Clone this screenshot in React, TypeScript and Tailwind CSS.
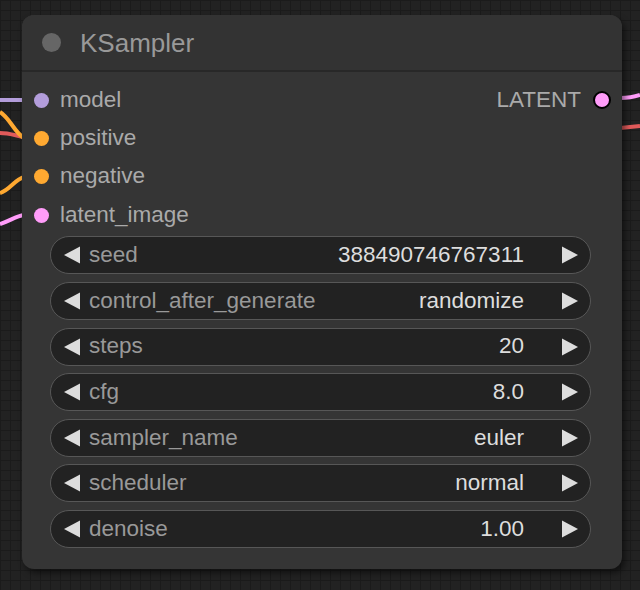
import React from "react";

const inputs = [
    { name: "model", color: "#b39ddb" },
    { name: "positive", color: "#ffa931" },
    { name: "negative", color: "#ffa931" },
    { name: "latent_image", color: "#ff9cf9" },
];

const widgets = [
    { name: "seed", value: "388490746767311" },
    { name: "control_after_generate", value: "randomize" },
    { name: "steps", value: "20" },
    { name: "cfg", value: "8.0" },
    { name: "sampler_name", value: "euler" },
    { name: "scheduler", value: "normal" },
    { name: "denoise", value: "1.00" },
];

function Arrow({ dir }: { dir: "left" | "right" }) {
    return (
        <svg width="18" height="18" viewBox="0 0 18 18" className="shrink-0">
            {dir === "left" ? (
                <polygon points="1,9 17,0.5 17,17.5" fill="#dddddd" />
            ) : (
                <polygon points="17,9 1,0.5 1,17.5" fill="#dddddd" />
            )}
        </svg>
    );
}

function Wires() {
    return (
        <svg className="absolute inset-0 pointer-events-none" width="640" height="590">
            {/* left side */}
            <path d="M0 100 L24 100" stroke="#b39ddb" strokeWidth="4" fill="none" />
            <path d="M0 133 C8 133 14 135 24 137" stroke="#e05a5a" strokeWidth="4" fill="none" />
            <path d="M0 112 C10 118 14 132 24 138" stroke="#ffa931" strokeWidth="4" fill="none" />
            <path d="M0 193 C10 190 14 180 24 177" stroke="#ffa931" strokeWidth="4" fill="none" />
            <path d="M0 224 C10 221 16 216 24 215" stroke="#ff9cf9" strokeWidth="4" fill="none" />
            {/* right side */}
            <path d="M620 98 C628 98 634 97 640 95" stroke="#ff9cf9" strokeWidth="4" fill="none" />
            <path d="M620 128 L640 126" stroke="#e05a5a" strokeWidth="4" fill="none" />
        </svg>
    );
}

export default function App() {
    return (
        <div
            className="relative w-[640px] h-[590px] overflow-hidden bg-[#222222] bg-[linear-gradient(#1b1b1b_1px,transparent_1px),linear-gradient(90deg,#1b1b1b_1px,transparent_1px)] bg-[size:10px_10px] pl-[22px] pt-[15px]"
            style={{ fontFamily: '"Liberation Sans", Arial, sans-serif' }}
        >
            <Wires />

            {/* Node */}
            <div className="relative w-[600px] h-[554px] bg-[#353535] rounded-[12px] shadow-[3px_4px_6px_rgba(0,0,0,0.5)] flex flex-col">
                {/* Title bar */}
                <div className="h-[57px] flex items-center bg-[#333333] rounded-t-[12px] border-b-2 border-[#282828]">
                    <div className="w-[19px] h-[19px] rounded-full bg-[#666666] ml-[20px]" />
                    <span className="ml-[19px] text-[26px] text-[#999999] leading-none">KSampler</span>
                </div>

                {/* Slots */}
                <div className="relative flex flex-col pt-[9px]">
                    {inputs.map((inp) => (
                        <div key={inp.name} className="h-[38.3px] flex items-center">
                            <div
                                className="w-[15px] h-[15px] rounded-full ml-[12px]"
                                style={{ backgroundColor: inp.color }}
                            />
                            <span className="ml-[11px] text-[22.5px] text-[#aaaaaa] leading-none">{inp.name}</span>
                        </div>
                    ))}
                    {/* Output */}
                    <div className="absolute right-0 top-[9px] h-[38.3px] flex items-center">
                        <span className="text-[22.5px] text-[#aaaaaa] leading-none">LATENT</span>
                        <div className="w-[18px] h-[18px] rounded-full bg-[#ff9cf9] border-2 border-black ml-[12px] mr-[11px]" />
                    </div>
                </div>

                {/* Widgets */}
                <div className="flex flex-col gap-[7.67px] mt-[2px] ml-[28px] mr-[31px]">
                    {widgets.map((w) => (
                        <div
                            key={w.name}
                            className="h-[38px] rounded-full bg-[#222222] border-[1.5px] border-[#575757] flex items-center pl-[12px] pr-[11px]"
                        >
                            <Arrow dir="left" />
                            <span className="ml-[8px] text-[22.5px] text-[#999999] leading-none">{w.name}</span>
                            <span className="ml-auto mr-[37px] text-[22.5px] text-[#dddddd] leading-none">{w.value}</span>
                            <Arrow dir="right" />
                        </div>
                    ))}
                </div>
            </div>
        </div>
    );
}
